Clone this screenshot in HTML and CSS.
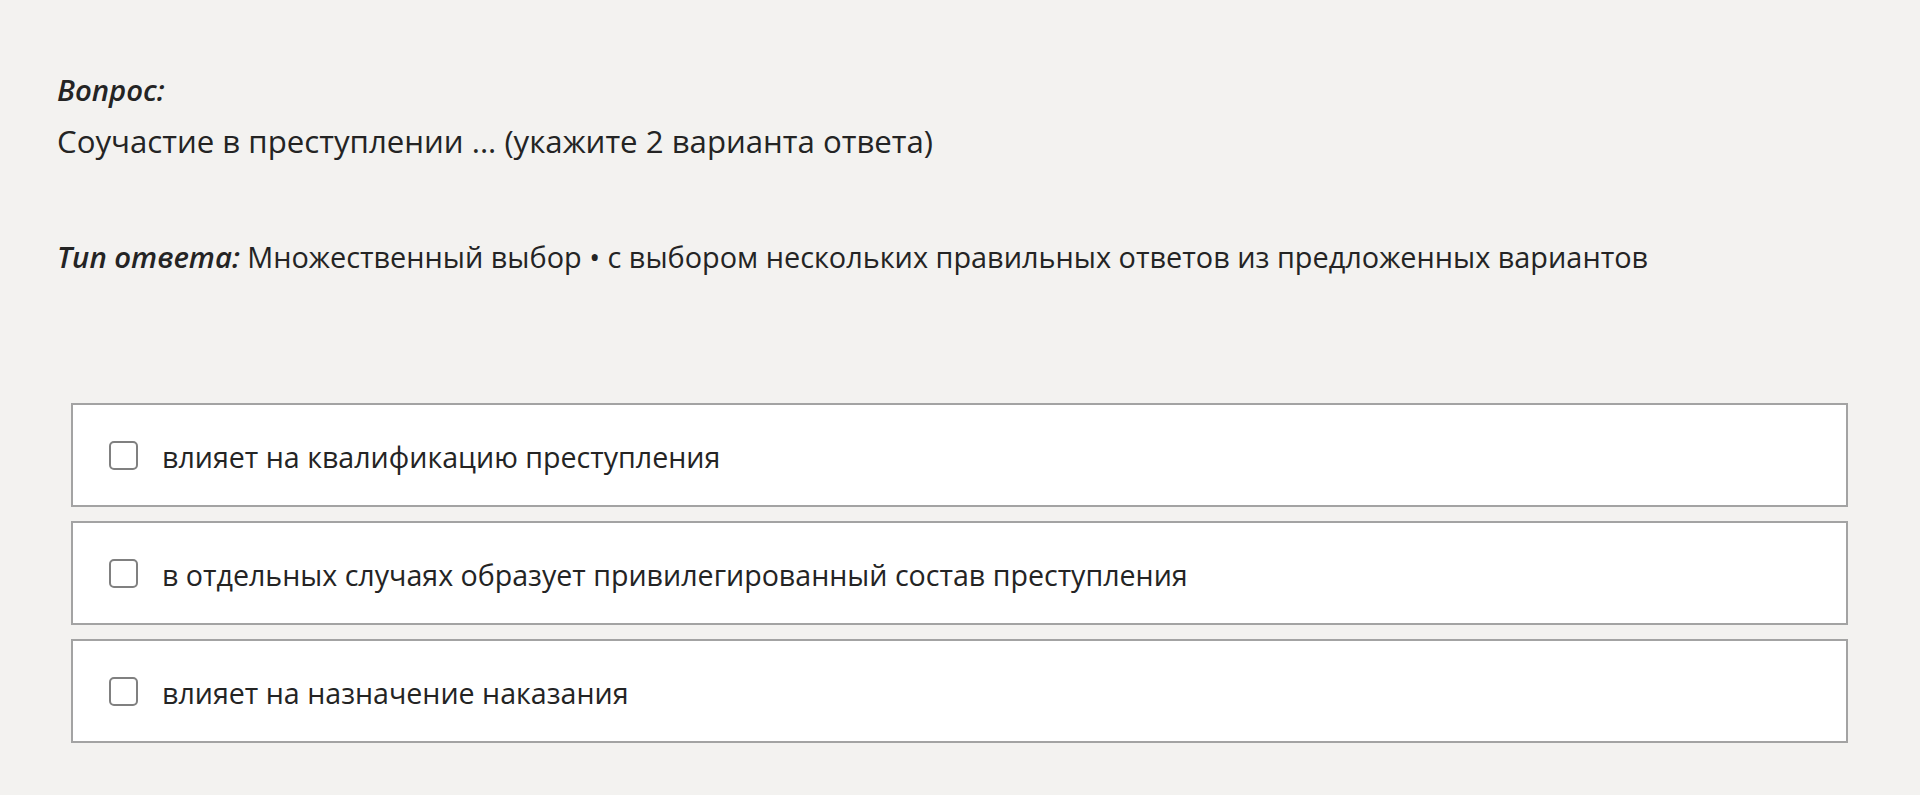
FILE: index.html
```html
<!DOCTYPE html>
<html lang="ru">
  <head>
    <meta charset="UTF-8" />
    <meta name="viewport" content="width=device-width, initial-scale=1.0" />
    <title>Вопрос</title>
    <link rel="stylesheet" href="styles.css">
  </head>
  <body>
    <div class="question">
      <div class="label">Вопрос:</div>
      <div class="question-text">Соучастие в преступлении ... (укажите 2 варианта ответа)</div>
      <div class="answer-type"><span class="label">Тип ответа:</span> Множественный выбор • с выбором нескольких правильных ответов из предложенных вариантов</div>
    </div>

    <ul class="options">
      <li class="option">
        <span class="check"></span>
        <span class="option-text">влияет на квалификацию преступления</span>
      </li>
      <li class="option">
        <span class="check"></span>
        <span class="option-text">в отдельных случаях образует привилегированный состав преступления</span>
      </li>
      <li class="option">
        <span class="check"></span>
        <span class="option-text">влияет на назначение наказания</span>
      </li>
    </ul>
  </body>
</html>
```
FILE: styles.css
```css
* {
  margin: 0;
  padding: 0;
  box-sizing: border-box;
}
ul {
  list-style: none;
}

body {
  background-color: #f3f2f0;
  color: #242424;
  font-family: "Open Sans", "Noto Sans", sans-serif;
  font-size: 28.6px;
  line-height: 40px;
}

/* шапка вопроса */
.question {
  padding: 70px 0 0 57px;
}

.label {
  font-style: italic;
  font-weight: 600;
  font-size: 29.3px;
}

.question-text {
  margin-top: 8.5px;
  font-size: 31.2px;
  line-height: 44px;
}

.answer-type {
  margin-top: 74px;
  font-size: 28.85px;
}

/* варианты ответа */
.options {
  display: flex;
  flex-direction: column;
  gap: 14px;
  margin: 126.5px 72px 0 71px;
}

.option {
  display: flex;
  align-items: center;
  height: 104px;
  padding-left: 36px;
  background-color: #fff;
  border: 2px solid #a3a3a3;
}

.check {
  flex: none;
  width: 29px;
  height: 29px;
  margin-right: 24px;
  border: 2px solid #808080;
  border-radius: 5px;
  background-color: #fff;
}

/* текст чуть ниже центра, как в оригинале */
.option-text {
  padding-top: 3px;
}
```
